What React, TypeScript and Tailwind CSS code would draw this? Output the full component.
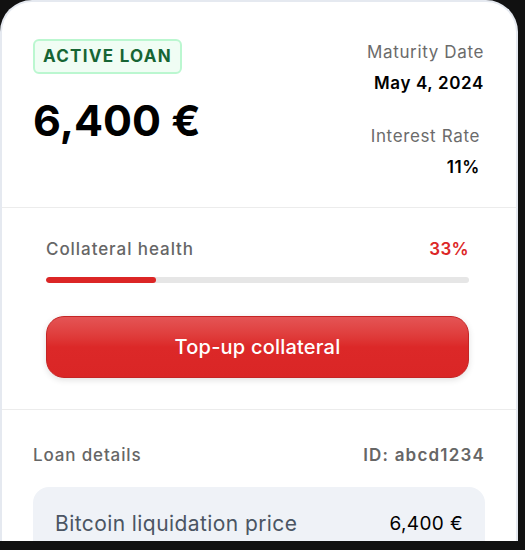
import React from 'react';

const font = { fontFamily: 'Inter, "Noto Sans", sans-serif' };

export default function App() {
  return (
    <div className="h-[550px] w-[525px] bg-[#111111]" style={font}>
      <div className="h-[541px] w-[518px] overflow-hidden rounded-t-[32px] border-2 border-b-0 border-[#e5e9f0] bg-white">
        {/* ── Summary ── */}
        <div className="flex h-[206px] justify-between border-b border-[#ececec] pl-[31px] pr-[32px] pt-[37px]">
          <div>
            <div className="inline-flex h-[35px] items-center rounded-[6px] border-2 border-[#bbf7d0] bg-[#f0fdf4] px-[8px] text-[17px] font-bold tracking-[0.075em] text-[#166534]">
              ACTIVE LOAN
            </div>
            <div className="mt-[25px] text-[43px] font-bold leading-none tracking-[0em] text-black">6,400 €</div>
          </div>
          <div className="mt-[2px] text-right tracking-[0.04em]">
            <div className="text-[17px] leading-[22px] text-[#6b6b6b]">Maturity Date</div>
            <div className="mt-[9px] text-[17px] font-semibold leading-[22px] text-black">May 4, 2024</div>
            <div className="mr-[4px] mt-[31px] text-[17px] leading-[22px] text-[#6b6b6b]">Interest Rate</div>
            <div className="mr-[4px] mt-[9px] text-[17px] font-semibold leading-[22px] text-black">11%</div>
          </div>
        </div>

        {/* ── Collateral ── */}
        <div className="border-b border-[#ececec] pb-[31px] pl-[44px] pr-[47px] pt-[30px]">
          <div className="flex items-center justify-between text-[17px] leading-[22px]">
            <span className="font-medium tracking-[0.055em] text-[#666666]">Collateral health</span>
            <span className="font-semibold tracking-[0.02em] text-[#dc2626]">33%</span>
          </div>
          <div className="mt-[17px] h-[6px] w-full overflow-hidden rounded-full bg-[#e6e6e6]">
            <div className="h-full w-[26%] rounded-full bg-[#dc2626]" />
          </div>
          <button className="mt-[33px] flex h-[62px] w-full items-center justify-center rounded-[18px] border border-[#c42525] bg-gradient-to-b from-[#e45455] via-[#dc2828] to-[#da2626] text-[20px] font-medium tracking-[0.01em] text-white shadow-[0_2px_6px_rgba(0,0,0,0.12)]">
            Top-up collateral
          </button>
        </div>

        {/* ── Loan details ── */}
        <div className="px-[31px] pt-[34px]">
          <div className="flex items-center justify-between text-[17px] leading-[22px] text-[#666666]">
            <span className="font-medium tracking-[0.05em]">Loan details</span>
            <span className="font-semibold tracking-[0.07em]">ID: abcd1234</span>
          </div>
          <div className="mt-[21px] h-[80px] rounded-[16px] bg-[#eff2f7] px-[22px] pt-[24px]">
            <div className="flex items-center justify-between leading-[26px]">
              <span className="text-[21px] tracking-[0.02em] text-[#4b5563]">Bitcoin liquidation price</span>
              <span className="text-[19px] tracking-[0.02em] text-black">6,400 €</span>
            </div>
          </div>
        </div>
      </div>
    </div>
  );
}
